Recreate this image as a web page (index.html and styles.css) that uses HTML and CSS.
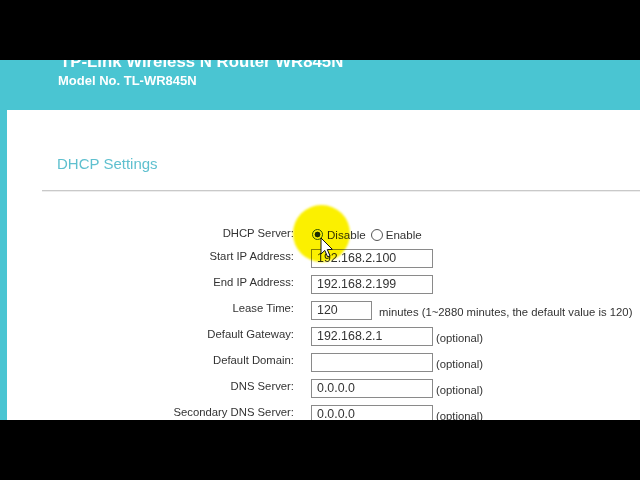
FILE: index.html
```html
<!DOCTYPE html>
<html>
<head>
<meta charset="utf-8">
<link rel="stylesheet" href="styles.css">
</head>
<body>
<div class="frame">
  <div class="bar"></div>
  <div class="view">
    <div class="header">
      <div class="title">TP-Link Wireless N Router WR845N</div>
      <div class="model">Model No. TL-WR845N</div>
    </div>
    <div class="panel">
      <div class="section-title">DHCP Settings</div>
      <div class="rule"></div>
      <div class="form">
        <div class="label first">DHCP Server:</div>
        <div class="ctrl radios">
          <span class="radio on"></span><span class="rtext">Disable</span>
          <span class="radio off"></span><span class="rtext">Enable</span>
        </div>

        <div class="label">Start IP Address:</div>
        <div class="ctrl"><span class="input">192.168.2.100</span></div>

        <div class="label">End IP Address:</div>
        <div class="ctrl"><span class="input">192.168.2.199</span></div>

        <div class="label">Lease Time:</div>
        <div class="ctrl"><span class="input short">120</span><span class="note wide">minutes (1~2880 minutes, the default value is 120)</span></div>

        <div class="label">Default Gateway:</div>
        <div class="ctrl"><span class="input">192.168.2.1</span><span class="note">(optional)</span></div>

        <div class="label">Default Domain:</div>
        <div class="ctrl"><span class="input"></span><span class="note">(optional)</span></div>

        <div class="label">DNS Server:</div>
        <div class="ctrl"><span class="input">0.0.0.0</span><span class="note">(optional)</span></div>

        <div class="label">Secondary DNS Server:</div>
        <div class="ctrl"><span class="input">0.0.0.0</span><span class="note">(optional)</span></div>
      </div>
    </div>
    <div class="highlight"></div>
    <svg class="cursor" width="14" height="22" viewBox="0 0 14 22">
      <path d="M1 1 L1 17 L4.8 13.4 L7.6 19.8 L10 18.8 L7.3 12.6 L12.4 12.4 Z" fill="#fff" stroke="#111" stroke-width="1" stroke-linejoin="round"/>
    </svg>
  </div>
  <div class="bar"></div>
</div>
</body>
</html>
```

FILE: styles.css
```css
html, body {
  margin: 0;
  padding: 0;
  background: #000;
}

.frame {
  width: 640px;
  height: 480px;
  display: flex;
  flex-direction: column;
  font-family: "Liberation Sans", Arial, sans-serif;
}

.bar {
  height: 60px;
  flex: none;
  background: #000;
  position: relative;
  z-index: 3;
}

.view {
  height: 360px;
  flex: none;
  background: #4ac5d2;
  position: relative;
  overflow: hidden;
  display: flex;
  flex-direction: column;
}

.header {
  height: 50px;
  flex: none;
  padding-left: 59px;
  color: #fff;
  font-weight: bold;
}

.title {
  font-size: 16.8px;
  line-height: 18px;
  margin-top: -7px;
  padding-left: 1px;
}

.model {
  font-size: 13px;
  line-height: 14px;
  margin-top: 3px;
  margin-left: -1px;
}

.panel {
  flex: 1;
  margin-left: 7px;
  background: #fff;
}

.section-title {
  font-size: 15px;
  line-height: 18px;
  color: #5fc0cf;
  padding-top: 45px;
  padding-left: 50px;
}

.rule {
  margin-top: 17px;
  margin-left: 35px;
  border-top: 1px solid #c9c9c9;
  border-bottom: 1px solid #ededed;
}

.form {
  display: grid;
  grid-template-columns: 194px auto;
  column-gap: 17px;
  row-gap: 7px;
  margin-top: 25px;
  padding-left: 93px;
  font-size: 11.3px;
  color: #333;
}

.label {
  text-align: right;
  line-height: 15px;
  height: 19px;
  white-space: nowrap;
}

.label.first {
  height: 25px;
  padding-top: 9px;
  box-sizing: border-box;
}

.ctrl {
  display: flex;
  align-items: center;
  height: 19px;
  white-space: nowrap;
}

.radios {
  font-size: 11.6px;
  height: 25px;
  box-sizing: border-box;
  padding-top: 10px;
}

.radio {
  width: 11px;
  height: 11px;
  box-sizing: border-box;
  border-radius: 50%;
  border: 1px solid #555;
  background: #fff;
  display: inline-block;
  flex: none;
}

.radio.on {
  margin-left: 1px;
  border-color: #2f5a1e;
  background: radial-gradient(circle, #1a2fd6 0 2.6px, #fff 3.2px);
}

.radio.off {
  width: 12px;
  height: 12px;
  margin-left: 5px;
}

.rtext {
  margin-left: 4px;
}

.radio.off + .rtext {
  margin-left: 3px;
}

.input {
  box-sizing: border-box;
  width: 122px;
  height: 19px;
  border: 1px solid #8a8a8a;
  background: #fff;
  font-size: 12.4px;
  line-height: 17px;
  padding-left: 5px;
  color: #333;
  flex: none;
}

.input.short {
  width: 61px;
}

.note {
  margin-left: 3px;
  padding-top: 2px;
}

.note.wide {
  margin-left: 7px;
}

.highlight {
  position: absolute;
  left: 293px;
  top: 145px;
  width: 57px;
  height: 57px;
  border-radius: 50%;
  background: #fbf000;
  filter: blur(1px);
  mix-blend-mode: multiply;
  z-index: 2;
}

.cursor {
  position: absolute;
  left: 320px;
  top: 177px;
  z-index: 2;
}
```
